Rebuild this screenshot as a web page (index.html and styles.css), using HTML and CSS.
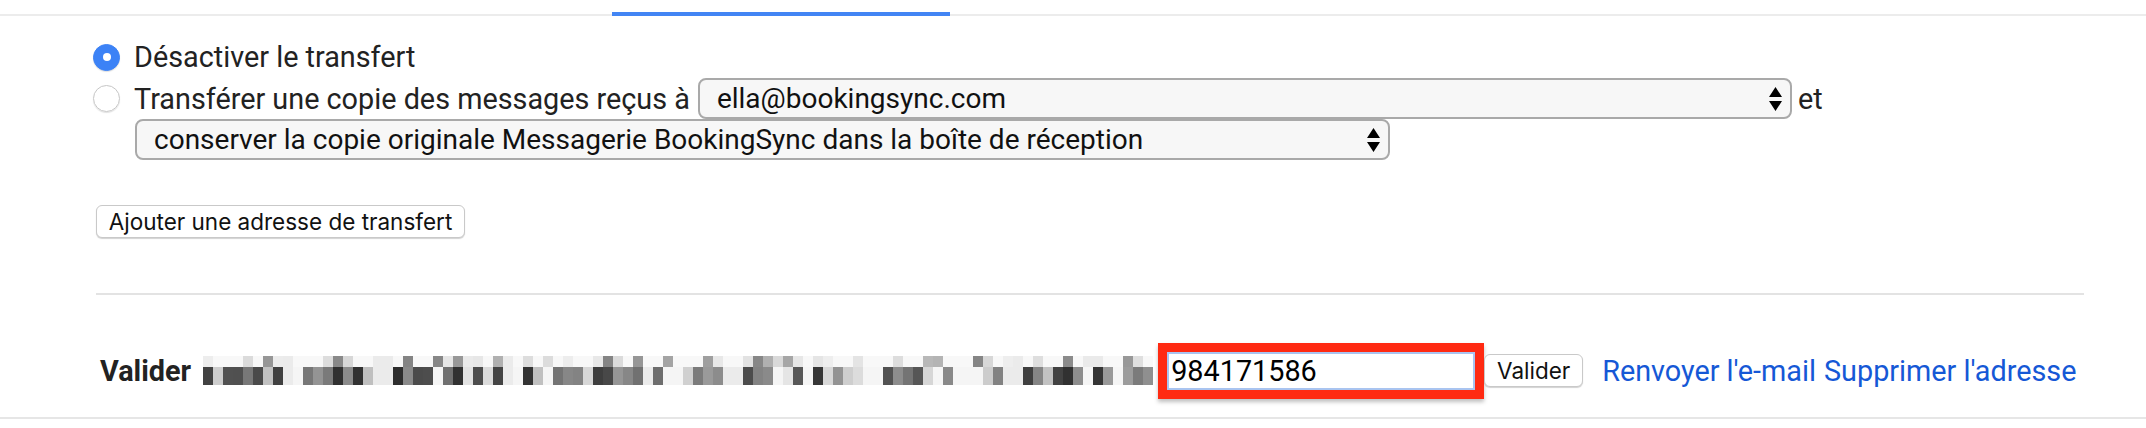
FILE: index.html
```html
<!DOCTYPE html>
<html lang="fr">
  <head>
    <meta charset="UTF-8" />
    <title>Transfert et POP/IMAP</title>
    <link rel="stylesheet" href="styles.css">
  </head>

  <body>
    <div class="tabs">
      <span class="tab active"></span>
    </div>

    <div class="forward">
      <div class="opt">
        <span class="radio on"></span>
        <span>Désactiver le transfert</span>
      </div>
      <div class="opt">
        <span class="radio"></span>
        <span>Transférer une copie des messages reçus à</span>
        <div class="select to">
          <span>ella@bookingsync.com</span>
          <svg class="arrows" width="13" height="24" viewBox="0 0 13 24"><path d="M6.5 0 L13 10 L0 10 Z M0 14 L13 14 L6.5 24 Z" fill="#000"/></svg>
        </div>
        <span>et</span>
      </div>
      <div class="select keep">
        <span>conserver la copie originale Messagerie BookingSync dans la boîte de réception</span>
        <svg class="arrows" width="13" height="24" viewBox="0 0 13 24"><path d="M6.5 0 L13 10 L0 10 Z M0 14 L13 14 L6.5 24 Z" fill="#000"/></svg>
      </div>
      <button type="button" class="btn add">Ajouter une adresse de transfert</button>
    </div>

    <hr class="sep">

    <div class="verify">
      <b class="label">Valider</b>
      <div class="mosaic" id="mosaic"></div>
      <div class="mark">
        <input type="text" class="code" value="984171586" />
      </div>
      <button type="button" class="btn ok">Valider</button>
      <a href="#" class="link">Renvoyer l'e-mail</a>
      <a href="#" class="link">Supprimer l'adresse</a>
    </div>

    <div class="endline"></div>

    <script>
      // flou de l'adresse e-mail (mosaique)
      var box = document.getElementById('mosaic');
      var seed = 11;
      function rnd() {
        seed = (seed * 9301 + 49297) % 233280;
        return seed / 233280;
      }
      var cols = 95;
      var gaps = [8, 9, 17, 18, 30, 31, 44, 52, 53, 66, 67, 80, 81];
      for (var row = 0; row < 2; row++) {
        for (var i = 0; i < cols; i++) {
          var cell = document.createElement('span');
          var r = rnd();
          var g;
          if (row == 1) {
            if (r < 0.12) g = 245;
            else if (r < 0.35) g = 190 + Math.floor(rnd() * 40);
            else if (r < 0.7) g = 110 + Math.floor(rnd() * 50);
            else g = 40 + Math.floor(rnd() * 50);
          } else {
            if (r < 0.5) g = 248;
            else if (r < 0.8) g = 215 + Math.floor(rnd() * 25);
            else g = 130 + Math.floor(rnd() * 60);
          }
          if (gaps.indexOf(i) >= 0) g = Math.max(g, 235);
          cell.style.background = 'rgb(' + g + ',' + g + ',' + g + ')';
          box.appendChild(cell);
        }
      }
    </script>
  </body>
</html>
```

FILE: styles.css
```css
body {
  margin: 0;
  font-family: Roboto, "Liberation Sans", sans-serif;
  font-size: 28.8px;
  color: #222;
  background: #fff;
}
.tabs {
  height: 14px;
  border-bottom: 2px solid #ececec;
  display: flex;
}
.tab.active {
  margin-left: 612px;
  width: 338px;
  height: 12px;
  border-bottom: 4px solid #4285f4;
}
.forward {
  padding: 20px 0 0 93px;
}
.opt {
  display: flex;
  align-items: center;
  height: 42px;
}
.opt + .opt {
  height: 41px;
}
.radio {
  width: 25px;
  height: 25px;
  border: 1px solid #c6c6c6;
  border-radius: 50%;
  margin-right: 14px;
  box-shadow: 0 1px 1px rgba(0,0,0,0.12);
  display: flex;
  align-items: center;
  justify-content: center;
  flex-shrink: 0;
}
.radio.on {
  background: #3c82f6;
  border-color: #3c82f6;
}
.radio.on::after {
  content: "";
  width: 8px;
  height: 8px;
  border-radius: 50%;
  background: #fff;
}
.select {
  display: flex;
  align-items: center;
  justify-content: space-between;
  height: 37px;
  padding: 0 8px 0 17px;
  background: #f7f7f7;
  border: 2px solid #a9a9a9;
  border-radius: 8px;
  font-size: 28px;
  color: #111;
  box-sizing: content-box;
}
.select.to {
  width: 1065px;
  margin: 0 6px 0 8px;
}
.select.keep {
  width: 1226px;
  margin-left: 42px;
}
.arrows {
  flex-shrink: 0;
}
.btn {
  font-family: Inter, Roboto, sans-serif;
  font-size: 22.5px;
  color: #111;
  background: #fff;
  border: 1px solid #c9c9c9;
  border-radius: 6px;
  box-shadow: 0 1px 1px rgba(0,0,0,0.18);
  padding: 0;
}
.add {
  display: block;
  width: 369px;
  height: 33px;
  margin: 45px 0 0 3px;
}
.sep {
  margin: 55px 62px 0 96px;
  border: none;
  border-top: 2px solid #e3e3e3;
}
.verify {
  display: flex;
  align-items: center;
  height: 55px;
  margin: 48px 0 0 100px;
}
.label {
  font-weight: bold;
  margin-right: 12px;
}
.mosaic {
  width: 950px;
  height: 29px;
  display: grid;
  grid-template-columns: repeat(95, 10px);
  grid-template-rows: 11px 18px;
  margin-right: 5px;
}
.mark {
  border: 9px solid #ff2a12;
  box-shadow: 0 3px 4px rgba(0,0,0,0.25);
}
.code {
  width: 302px;
  height: 34px;
  border: 2px solid #a9c4f0;
  padding: 0 0 0 2px;
  margin: 0;
  font-family: Roboto, sans-serif;
  font-size: 28.8px;
  color: #000;
  outline: none;
}
.ok {
  width: 99px;
  height: 33px;
}
.link {
  color: #1558d6;
  text-decoration: none;
  margin-left: 19px;
}
.link + .link {
  margin-left: 8px;
}
.endline {
  margin-top: 19px;
  border-top: 2px solid #e6e6e6;
}
```
